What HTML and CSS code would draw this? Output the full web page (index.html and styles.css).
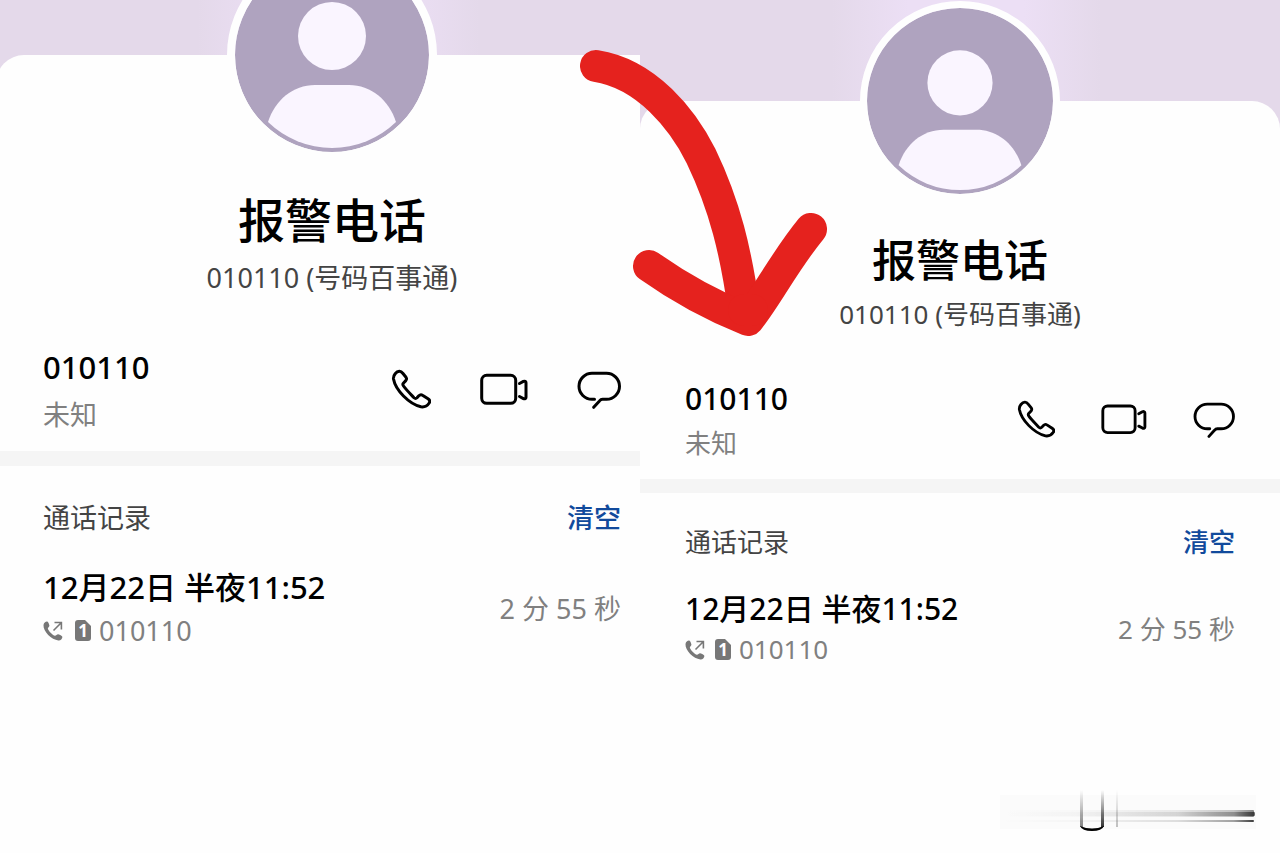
FILE: index.html
```html
<!DOCTYPE html>
<html lang="zh-CN">
    <head>
        <meta charset="UTF-8" />
        <meta name="viewport" content="width=device-width, initial-scale=1.0" />
        <title>报警电话</title>
        <link rel="stylesheet" href="styles.css">
    </head>
    <body>
        <!-- shared icons -->
        <svg class="defs" width="0" height="0" aria-hidden="true">
            <symbol id="person" viewBox="0 0 194 194">
                <circle cx="97" cy="78" r="34" />
                <path d="M33 164C40 142 58 127 80 127H114C136 127 154 142 161 164A92 92 0 0 1 33 164Z" />
            </symbol>
            <symbol id="phone" viewBox="0 0 40 40">
                <path d="M2.5 10C2 6 5.5 2.5 8.3 2.3C10 2.2 11 3.2 12 4.5L15 8.3C16 9.7 15.6 10.6 14.8 11.6L12.3 14.2C11.6 15 11.8 16 12.5 17C15 20.5 19.5 25 23 28.7C24 29.7 25.2 29.6 26 28.8L27.8 26.8C28.9 25.7 30.2 25.3 31.5 26.2L37 29.8C38.8 31 39 32.8 38.2 34C36.5 36.6 33.5 38.3 30 37.8C18 35 4.5 21 2.5 10Z" />
            </symbol>
            <symbol id="video" viewBox="0 0 48 40">
                <rect x="1.7" y="6.3" width="34" height="28" rx="5" />
                <path d="M39.5 14.5L43.4 12.4C44.8 11.8 46 12.4 46 13.7V28.3C46 29.6 44.8 30.2 43.4 29.6L39.5 27.5" />
            </symbol>
            <symbol id="chat" viewBox="0 0 44 40">
                <path d="M17.5 30.3H15A13 13 0 0 1 15 4.3H29.5A13 13 0 0 1 29.5 30.3H25.5C24 30.3 23.4 30.8 22.5 31.9L16.7 38.3" />
            </symbol>
            <symbol id="outgoing" viewBox="0 0 20 20">
                <path class="solid" d="M0.5 4C0.8 2 2.4 0.6 4 0.6C5 0.6 6 2.6 6.4 4.4C6.6 5.6 5 6.4 4.8 7.4C5.4 9.8 9.4 14 12 14.8C13.2 14.8 14 13 15.2 13.2C17.2 13.8 19.4 14.8 19.4 16C19.2 18 17.6 19.6 15.4 19.4C8.6 18.8 0 10.6 0.5 4Z" />
                <path class="line" d="M10.5 9.5L18.2 1.8M11.5 1.5H18.4V8.5" />
            </symbol>
        </svg>

        <main>
            <section class="panel panel-left">
                <div class="phone">
                    <div class="card">
                        <div class="avatar"><svg><use href="#person" /></svg></div>
                        <h1>报警电话</h1>
                        <p class="sub">010110 (号码百事通)</p>
                        <div class="contact">
                            <div>
                                <p class="number">010110</p>
                                <p class="place">未知</p>
                            </div>
                            <div class="actions">
                                <button type="button" aria-label="拨打电话"><svg class="icon-phone"><use href="#phone" /></svg></button>
                                <button type="button" aria-label="视频通话"><svg class="icon-video"><use href="#video" /></svg></button>
                                <button type="button" aria-label="发送信息"><svg class="icon-chat"><use href="#chat" /></svg></button>
                            </div>
                        </div>
                        <div class="history">
                            <div class="history-head">
                                <h2>通话记录</h2>
                                <button type="button" class="clear">清空</button>
                            </div>
                            <div class="call">
                                <div>
                                    <p class="date">12月22日 半夜11:52</p>
                                    <p class="line-info">
                                        <svg class="icon-out"><use href="#outgoing" /></svg>
                                        <span class="sim">1</span>
                                        <span>010110</span>
                                    </p>
                                </div>
                                <p class="duration">2 分 55 秒</p>
                            </div>
                        </div>
                    </div>
                </div>
            </section>

            <section class="panel panel-right">
                <div class="phone">
                    <div class="card">
                        <div class="avatar"><svg><use href="#person" /></svg></div>
                        <h1>报警电话</h1>
                        <p class="sub">010110 (号码百事通)</p>
                        <div class="contact">
                            <div>
                                <p class="number">010110</p>
                                <p class="place">未知</p>
                            </div>
                            <div class="actions">
                                <button type="button" aria-label="拨打电话"><svg class="icon-phone"><use href="#phone" /></svg></button>
                                <button type="button" aria-label="视频通话"><svg class="icon-video"><use href="#video" /></svg></button>
                                <button type="button" aria-label="发送信息"><svg class="icon-chat"><use href="#chat" /></svg></button>
                            </div>
                        </div>
                        <div class="history">
                            <div class="history-head">
                                <h2>通话记录</h2>
                                <button type="button" class="clear">清空</button>
                            </div>
                            <div class="call">
                                <div>
                                    <p class="date">12月22日 半夜11:52</p>
                                    <p class="line-info">
                                        <svg class="icon-out"><use href="#outgoing" /></svg>
                                        <span class="sim">1</span>
                                        <span>010110</span>
                                    </p>
                                </div>
                                <p class="duration">2 分 55 秒</p>
                            </div>
                        </div>
                    </div>
                </div>
            </section>

            <!-- red hand-drawn arrow over both screens -->
            <svg class="arrow" viewBox="0 0 250 290" aria-hidden="true">
                <path d="M16 18C67 26 103 72 121 108C145 158 156 204 164 262" />
                <path d="M69 218C100 240 138 260 168 272C186 250 204 214 231 181" />
                <path d="M164 262L172 262" />
            </svg>

            <!-- smudge in the corner -->
            <svg class="smudge" viewBox="0 0 256 44" aria-hidden="true">
                <defs>
                    <linearGradient id="streak">
                        <stop offset="0" stop-color="#000" stop-opacity="0" />
                        <stop offset="0.3" stop-color="#000" stop-opacity="0.03" />
                        <stop offset="0.7" stop-color="#000" stop-opacity="0.15" />
                        <stop offset="0.92" stop-color="#000" stop-opacity="0.45" />
                        <stop offset="1" stop-color="#000" stop-opacity="0.95" />
                    </linearGradient>
                    <linearGradient id="drip" x2="0" y2="1">
                        <stop offset="0" stop-color="#000" stop-opacity="0" />
                        <stop offset="1" stop-color="#000" stop-opacity="0.8" />
                    </linearGradient>
                </defs>
                <rect y="7" width="256" height="34" fill="#000" opacity="0.01" />
                <rect y="22" width="254" height="7" rx="1" fill="url(#streak)" opacity="0.5" />
                <rect y="24" width="255" height="4" rx="1" fill="url(#streak)" opacity="0.6" />
                <rect y="32" width="254" height="2" rx="1" fill="url(#streak)" opacity="0.8" />
                <rect x="80" y="2" width="3" height="37" fill="url(#drip)" opacity="0.6" />
                <rect x="101" y="2" width="3" height="37" fill="url(#drip)" />
                <rect x="116" y="2" width="2" height="37" fill="url(#drip)" opacity="0.3" />
                <path d="M80 38Q92 43 104 38Q102 43 92 43Q82 43 80 38Z" />
            </svg>
        </main>
    </body>
</html>
```

FILE: styles.css
```css
* {
    box-sizing: border-box;
}

body {
    margin: 0;
    font-family: "Noto Sans", "Noto Sans CJK SC", sans-serif;
    color: #000;
    background-color: #fefefe;
}

h1,
h2,
p {
    margin: 0;
    font-weight: 400;
}

button {
    padding: 0;
    border: 0;
    background: none;
    font-family: inherit;
    cursor: pointer;
}

svg {
    display: block;
}

.defs {
    position: absolute;
}

main {
    position: relative;
    display: grid;
    grid-template-columns: 1fr 1fr;
    min-height: 100vh;
    overflow: hidden;
}

.panel {
    display: grid;
    overflow: hidden;
}

.phone {
    display: flex;
    flex-direction: column;
    background: linear-gradient(90deg, #e4d9ea, #e4d9ea 30%, #ecdff5 42%, #ecdff5 60%, #e4d9ea 72%, #e4d9ea);
}

.card {
    display: flow-root;
    flex: 1;
    background-color: #fefefe;
    border-radius: 28px 28px 0 0;
}

/* the left screen is a bit larger and runs past both edges */
.panel-left .phone {
    margin: 0 -28px 0 -4px;
    padding-top: 55px;
}

.panel-right .phone {
    padding-top: 101px;
}

.avatar {
    width: 210px;
    height: 210px;
    margin: -105px auto 0;
    border: 8px solid #fefefe;
    border-radius: 50%;
    background: #afa3bf;
    background-clip: padding-box;
}

.avatar svg {
    width: 100%;
    height: 100%;
    fill: #faf5ff;
}

h1 {
    margin-top: 32px;
    font-size: 47px;
    font-weight: 500;
    line-height: 56px;
    text-align: center;
}

.sub {
    margin-top: 10px;
    font-size: 27px;
    line-height: 40px;
    text-align: center;
    color: #444;
}

.contact {
    display: flex;
    justify-content: space-between;
    align-items: center;
    margin-top: 46px;
    padding: 0 47px 13px;
    border-bottom: 15px solid #f5f5f5;
}

.number {
    font-size: 31px;
    font-weight: 500;
    line-height: 47px;
}

.place {
    font-size: 27px;
    line-height: 47px;
    color: #808080;
}

.actions {
    display: flex;
    gap: 49px;
    padding-bottom: 5px;
}

.actions svg {
    height: 40px;
    fill: none;
    stroke: #000;
    stroke-width: 3;
    stroke-linecap: round;
    stroke-linejoin: round;
}

.icon-phone {
    width: 40px;
}

.icon-video {
    width: 48px;
}

.icon-chat {
    width: 44px;
}

.history {
    padding: 32px 47px 0;
}

.history-head,
.call {
    display: flex;
    justify-content: space-between;
    align-items: center;
}

h2,
.clear {
    font-size: 27px;
    line-height: 40px;
}

h2 {
    color: #444;
}

.clear {
    font-weight: 500;
    color: #114a9c;
}

.call {
    margin-top: 28px;
}

.date {
    font-size: 31px;
    font-weight: 500;
    line-height: 43px;
}

.line-info {
    display: flex;
    align-items: center;
    font-size: 27px;
    line-height: 43px;
    color: #808080;
}

.icon-out {
    width: 20px;
    height: 20px;
    margin-right: 12px;
}

.sim {
    width: 16px;
    height: 21px;
    margin-right: 8px;
    border-radius: 3px;
    font-size: 17px;
    font-weight: 700;
    line-height: 21px;
    text-align: center;
    color: #fff;
    background-color: #777;
    clip-path: polygon(0 0, 10px 0, 100% 6px, 100% 100%, 0 100%);
}

.solid {
    fill: #777;
}

.line {
    fill: none;
    stroke: #777;
    stroke-width: 1.6;
}

.duration {
    font-size: 27px;
    line-height: 40px;
    color: #808080;
}

.panel-right .avatar {
    width: 200px;
    height: 200px;
    margin-top: -100px;
    border-width: 7px;
}

.panel-right h1 {
    margin-top: 31px;
    font-size: 44px;
}

.panel-right .sub {
    margin-top: 6px;
    font-size: 26px;
}

.panel-right .contact {
    margin-top: 43px;
    padding: 0 45px 14px;
    border-bottom-width: 14px;
}

.panel-right .number {
    font-size: 30px;
    line-height: 44px;
}

.panel-right .place {
    font-size: 26px;
    line-height: 44px;
}

.panel-right .actions {
    gap: 46px;
}

.panel-right .actions svg {
    height: 38px;
}

.panel-right .icon-phone {
    width: 38px;
}

.panel-right .icon-video {
    width: 46px;
}

.panel-right .icon-chat {
    width: 42px;
}

.panel-right .history {
    padding: 29px 45px 0;
}

.panel-right h2,
.panel-right .clear,
.panel-right .duration {
    font-size: 26px;
}

.panel-right .call {
    margin-top: 26px;
}

.panel-right .date {
    font-size: 30px;
    line-height: 41px;
}

.panel-right .line-info {
    font-size: 26px;
    line-height: 41px;
}

.panel-right .icon-out {
    margin-right: 10px;
}

.arrow {
    position: absolute;
    top: 48px;
    left: calc(50% - 60px);
    width: 250px;
    height: 290px;
    fill: none;
    stroke: #e5221e;
    stroke-width: 32;
    stroke-linecap: round;
    stroke-linejoin: round;
}

.smudge {
    position: absolute;
    right: 24px;
    bottom: 21px;
    width: 256px;
    height: 44px;
}
```
